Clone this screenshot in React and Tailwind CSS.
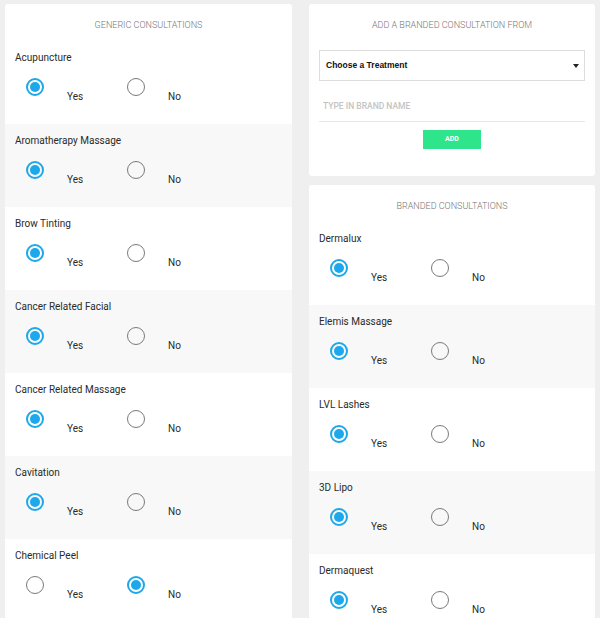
import { useState } from "react";

const generic = [
  { name: "Acupuncture", value: "yes" },
  { name: "Aromatherapy Massage", value: "yes" },
  { name: "Brow Tinting", value: "yes" },
  { name: "Cancer Related Facial", value: "yes" },
  { name: "Cancer Related Massage", value: "yes" },
  { name: "Cavitation", value: "yes" },
  { name: "Chemical Peel", value: "no" },
];

const branded = [
  { name: "Dermalux", value: "yes" },
  { name: "Elemis Massage", value: "yes" },
  { name: "LVL Lashes", value: "yes" },
  { name: "3D Lipo", value: "yes" },
  { name: "Dermaquest", value: "yes" },
];

function Radio({ checked, label, onClick }) {
  return (
    <button onClick={onClick} className="flex w-[101px] items-start text-left">
      {checked ? (
        <span className="flex h-[18px] w-[18px] items-center justify-center rounded-full border-[2px] border-[#1ca8ea]">
          <span className="h-[10px] w-[10px] rounded-full bg-[#1ca8ea]" />
        </span>
      ) : (
        <span className="h-[18px] w-[18px] rounded-full border-[1.5px] border-[#7a7a7a]" />
      )}
      <span className="ml-[23px] mt-[13px] text-[10px] leading-[12px] text-[#2a2a2a]">
        {label}
      </span>
    </button>
  );
}

function ConsultList({ title, items }) {
  const [rows, setRows] = useState(items);

  const setValue = (index, value) => {
    const updated = [...rows];
    updated[index] = { ...updated[index], value };
    setRows(updated);
  };

  return (
    <div className="overflow-hidden rounded-[3px] bg-white">
      <div className="pt-[16px] pb-[10px] text-center text-[9px] font-light leading-[11px] text-[#777]">
        {title}
      </div>
      {rows.map((row, index) => (
        <div
          key={row.name}
          className={`h-[83px] pl-[10px] pt-[11px] ${index % 2 ? "bg-[#f8f8f8]" : "bg-white"}`}
        >
          <div className="text-[10px] leading-[12px] text-[#2a2a2a]">{row.name}</div>
          <div className="ml-[11px] mt-[14px] flex">
            <Radio
              checked={row.value === "yes"}
              label="Yes"
              onClick={() => setValue(index, "yes")}
            />
            <Radio
              checked={row.value === "no"}
              label="No"
              onClick={() => setValue(index, "no")}
            />
          </div>
        </div>
      ))}
    </div>
  );
}

export default function App() {
  const [brand, setBrand] = useState("");

  return (
    <div
      className="flex h-[618px] gap-[17px] overflow-hidden bg-[#efefef] px-[5px] pt-[4px]"
      style={{ fontFamily: "Roboto, 'Liberation Sans', sans-serif" }}
    >
      <div className="w-[287px] shrink-0">
        <ConsultList title="GENERIC CONSULTATIONS" items={generic} />
      </div>

      <div className="flex w-[286px] shrink-0 flex-col gap-[9px]">
        <div className="h-[172px] shrink-0 rounded-[3px] bg-white px-[10px]">
          <div className="pt-[16px] text-center text-[9px] font-light leading-[11px] text-[#777]">
            ADD A BRANDED CONSULTATION FROM
          </div>
          <div className="mt-[19px] flex h-[31px] items-center justify-between border border-[#dcdcdc] pl-[6px] pr-[5px]">
            <span
              className="text-[8.5px] font-bold text-[#111]"
              style={{ fontFamily: "'Liberation Sans', Arial, sans-serif" }}
            >
              Choose a Treatment
            </span>
            <svg width="6" height="4" viewBox="0 0 6 4">
              <path d="M0 0h6L3 4z" fill="#222" />
            </svg>
          </div>
          <input
            value={brand}
            onChange={(e) => setBrand(e.target.value)}
            placeholder="TYPE IN BRAND NAME"
            className="mt-[14px] block h-[27px] w-full border-b border-[#e6e6e6] px-[4px] pb-[4px] text-[8.5px] font-medium text-[#333] outline-none placeholder:text-[#c4c4c4]"
          />
          <div className="mt-[8px] flex justify-center">
            <button className="h-[19px] w-[58px] bg-[#2fe58c] text-[7px] font-bold text-white">
              ADD
            </button>
          </div>
        </div>

        <div className="shrink-0">
          <ConsultList title="BRANDED CONSULTATIONS" items={branded} />
        </div>
      </div>
    </div>
  );
}
